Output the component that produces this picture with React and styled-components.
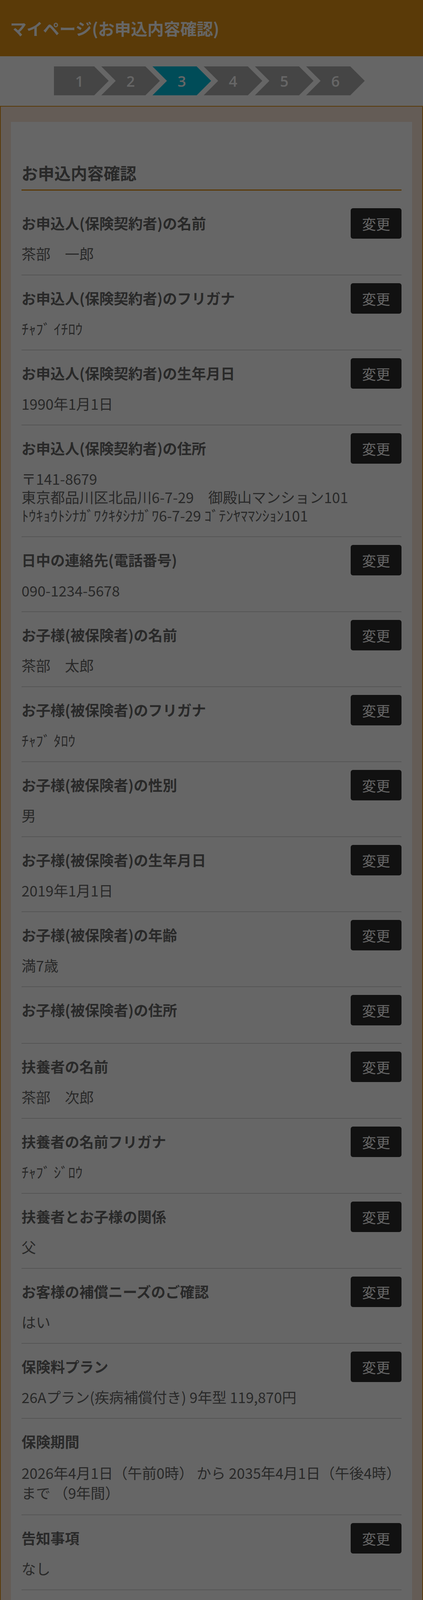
import styled, { createGlobalStyle } from 'styled-components'

const GlobalStyle = createGlobalStyle`
  html, body {
    margin: 0;
    padding: 0;
    background: #fff;
  }
  body {
    font-family: "Noto Sans CJK JP", "Noto Sans", sans-serif;
    color: #666;
  }
  * {
    box-sizing: border-box;
  }
`

const Page = styled.div`
  position: relative;
  width: 1082px;
  padding-bottom: 6px;
`

// coach-mark backdrop, the highlighted parts sit above it
const Dimmer = styled.div`
  position: absolute;
  inset: 0;
  background: rgba(0, 0, 0, 0.6);
  z-index: 10;
  pointer-events: none;
`

const Header = styled.header`
  height: 144px;
  background: #e19114;
  display: flex;
  align-items: center;
  padding-left: 26px;
`

const HeaderTitle = styled.h1`
  margin: 0;
  font-size: 42px;
  font-weight: 700;
  line-height: 1;
  color: #fff;
`

const StepBar = styled.ol`
  list-style: none;
  margin: 0;
  height: 127px;
  padding: 26px 11px 27px 0;
  display: flex;
  justify-content: center;
  background: #fff;
`

const Step = styled.li`
  width: ${p => (p.$first ? 140 : 150)}px;
  height: 74px;
  margin-left: ${p => (p.$first ? 0 : -19)}px;
  padding-right: ${p => (p.$first ? 10 : 0)}px;
  background: ${p => (p.$active ? '#00bedc' : '#acacac')};
  clip-path: ${p =>
    p.$first
      ? 'polygon(0 0, 103px 0, 140px 50%, 103px 100%, 0 100%)'
      : 'polygon(0 0, 113px 0, 150px 50%, 113px 100%, 0 100%, 37px 50%)'};
  display: flex;
  align-items: center;
  justify-content: center;
  font-family: "Open Sans", "Noto Sans", sans-serif;
  font-size: 38px;
  font-weight: 600;
  color: #fff;
`

const Panel = styled.main`
  border: 2px solid #e19114;
  background: #fae6d7;
  padding: 39px 26px 38px;
`

const Content = styled.div`
  background: #fff;
  padding: 100px 27px 71px;
`

const SectionHeading = styled.h2`
  margin: ${p => p.$top}px 0 ${p => p.$bottom}px;
  padding-bottom: 14px;
  border-bottom: 3px solid #e19114;
  font-size: 42px;
  font-weight: 700;
  line-height: 59px;
  color: #666;
`

const Row = styled.div`
  padding: 20px 0 30px;
  border-bottom: 2px solid #d5d5d5;
`

const RowHead = styled.div`
  display: flex;
  align-items: center;
  justify-content: space-between;
  gap: 20px;
  min-height: 78px;
`

const Label = styled.div`
  font-size: 37px;
  font-weight: 700;
  line-height: 1.4;
`

const ChangeButton = styled.button`
  flex: none;
  width: 130px;
  height: 78px;
  border: none;
  border-radius: 6px;
  background: #2b2b2b;
  color: #fff;
  font-family: inherit;
  font-size: 36px;
  padding: 0;
`

const Value = styled.div`
  margin-top: 15px;
  font-size: 37px;
  line-height: ${p => p.$lh || 47}px;
`

const Highlight = styled.div`
  position: relative;
  z-index: 11;
  margin-top: ${p => p.$top || 0}px;

  &::before {
    content: '';
    position: absolute;
    inset: ${p => p.$inset};
    background: #fff;
    border: 5px solid #ed1c24;
    z-index: -1;
  }
`

const NoticeBox = styled.div`
  background: #fff;
  border: 8px solid #3c3494;
  box-shadow: inset 0 0 0 1px #aaa3d6;
  padding: 50px 45px 83px 54px;
  color: #555;
  font-size: 37px;
`

const NoticeText = styled.p`
  margin: 0 0 ${p => p.$mb}px;
  line-height: 55px;
`

const CheckLine = styled.div`
  height: 49px;
  display: flex;
  align-items: center;
`

const CheckBox = styled.input`
  appearance: none;
  margin: 0;
  width: 32px;
  height: 31px;
  border: 2px solid #8c8c8c;
  border-radius: 5px;
  background: #fff;
`

const CheckLabel = styled.label`
  display: block;
  line-height: 49px;
`

const TextLink = styled.a`
  color: #3d8fd0;
  text-decoration: underline;
`

const BodyText = styled.p`
  margin: ${p => p.$top}px 0 0;
  font-size: 37px;
  line-height: 55px;
`

const ButtonRow = styled.div`
  margin-top: 96px;
  display: flex;
  justify-content: center;
  gap: 63px;
`

const BackButton = styled.button`
  width: 189px;
  height: 118px;
  border: 5px solid #6a6a6a;
  border-radius: 15px;
  background: #878787;
  color: #fff;
  font-family: inherit;
  font-size: 37px;
`

const NextButton = styled.button`
  display: block;
  width: 241px;
  height: 118px;
  border: 5px solid #6e8fa6;
  border-radius: 15px;
  background: #b0d9f1;
  color: #9a9a9a;
  font-family: inherit;
  font-size: 37px;
`

const rows = [
  { label: 'お申込人(保険契約者)の名前', value: ['茶部　一郎'], edit: true },
  { label: 'お申込人(保険契約者)のフリガナ', value: ['ﾁｬﾌﾞ ｲﾁﾛｳ'], edit: true },
  { label: 'お申込人(保険契約者)の生年月日', value: ['1990年1月1日'], edit: true },
  {
    label: 'お申込人(保険契約者)の住所',
    value: [
      '〒141-8679',
      '東京都品川区北品川6-7-29　御殿山マンション101',
      'ﾄｳｷｮｳﾄｼﾅｶﾞﾜｸｷﾀｼﾅｶﾞﾜ6-7-29 ｺﾞﾃﾝﾔﾏﾏﾝｼｮﾝ101',
    ],
    edit: true,
  },
  { label: '日中の連絡先(電話番号)', value: ['090-1234-5678'], edit: true },
  { label: 'お子様(被保険者)の名前', value: ['茶部　太郎'], edit: true },
  { label: 'お子様(被保険者)のフリガナ', value: ['ﾁｬﾌﾞ ﾀﾛｳ'], edit: true },
  { label: 'お子様(被保険者)の性別', value: ['男'], edit: true },
  { label: 'お子様(被保険者)の生年月日', value: ['2019年1月1日'], edit: true },
  { label: 'お子様(被保険者)の年齢', value: ['満7歳'], edit: true },
  { label: 'お子様(被保険者)の住所', value: [], edit: true },
  { label: '扶養者の名前', value: ['茶部　次郎'], edit: true },
  { label: '扶養者の名前フリガナ', value: ['ﾁｬﾌﾞ ｼﾞﾛｳ'], edit: true },
  { label: '扶養者とお子様の関係', value: ['父'], edit: true },
  { label: 'お客様の補償ニーズのご確認', value: ['はい'], edit: true },
  { label: '保険料プラン', value: ['26Aプラン(疾病補償付き) 9年型 119,870円'], edit: true },
  {
    label: '保険期間',
    value: ['2026年4月1日（午前0時） から 2035年4月1日（午後4時） まで （9年間）'],
    lh: 51,
  },
  { label: '告知事項', value: ['なし'], edit: true },
  { label: '代理店', value: ['ダイレクトマーケティング本部（13996）'] },
]

const steps = [1, 2, 3, 4, 5, 6]

export default function App() {
  return (
    <Page>
      <GlobalStyle />
      <Header>
        <HeaderTitle>マイページ(お申込内容確認)</HeaderTitle>
      </Header>

      <StepBar>
        {steps.map(n => (
          <Step key={n} $first={n === 1} $active={n === 3}>
            {n}
          </Step>
        ))}
      </StepBar>

      <Panel>
        <Content>
          <SectionHeading $top={0} $bottom={25}>お申込内容確認</SectionHeading>

          {rows.map(row => (
            <Row key={row.label}>
              <RowHead>
                <Label>{row.label}</Label>
                {row.edit && <ChangeButton type="button">変更</ChangeButton>}
              </RowHead>
              <Value $lh={row.lh}>
                {row.value.map((line, i) => (
                  <div key={i}>{line}</div>
                ))}
              </Value>
            </Row>
          ))}

          <Highlight $top={36} $inset="-16px -16px -18px -17px">
            <NoticeBox>
              <NoticeText $mb={28}>
                特に以下の項目について、お申込み前に再度ご確認ください。
              </NoticeText>
              <NoticeText $mb={47}>
                選択したプランの補償内容、保険金額、保険期間、保険料払込方法はご希望どおりですか。
                <br />
                また、補償内容、保険金額、保険料払込方法は当初のご意向とも相違ありませんか。
              </NoticeText>
              <CheckLine>
                <CheckBox type="checkbox" id="agree" />
              </CheckLine>
              <CheckLabel htmlFor="agree">
                「<TextLink href="#">重要事項説明書</TextLink>」 の内容について確認しました。
              </CheckLabel>
            </NoticeBox>
          </Highlight>

          <SectionHeading $top={47} $bottom={0}>保険料のお支払いについて</SectionHeading>
          <BodyText $top={25}>
            クレジットカードによるお支払いとなります。下記の通り、クレジットカードによるお支払い手続き完了日により保険始期日が異なりますので、ご注意ください。
          </BodyText>

          <SectionHeading $top={48} $bottom={0}>保険始期(補償開始日)について</SectionHeading>
          <BodyText $top={25}>
            2026年3月31日までにクレジットカードによるお支払い手続きが完了した場合、保険始期日は2026年4月1日となります。
            <br />
            2026年4月1日以降にクレジットカードによるお支払い手続きが完了した場合は、保険始期日は保険料決済日の属する月の翌月1日となります。
          </BodyText>

          <SectionHeading $top={48} $bottom={0}>保険期間と契約の継続について</SectionHeading>
          <BodyText $top={25}>
            保険期間はお申込みプランにより異なり、1年間から9年間までです。保険期間が１年のご契約については、保険期間の満了する３ヶ月前までに、書面でのご通知がない限り、毎年自動的に継続します。ただし、被保険者が22歳の誕生日を迎えた後の保険始期においては、自動継続を行いません。保険期間が１年を超える長期契約については保険期間満了時に保険契約は終了となります。
          </BodyText>

          <SectionHeading $top={48} $bottom={0}>Web約款の導入について</SectionHeading>
          <BodyText $top={25}>
            チャブ保険ではお客様の利便性と環境保護を推進するためにインターネットでご覧いただける
            <TextLink href="#">Web約款</TextLink>を導入いたしました。
          </BodyText>
          <BodyText $top={27}>
            インターネットからお申込みいただいた場合は、約款集(冊子版)のご送付を省略させていただいておりますが、約款集(冊子版)をご希望の場合は弊社までご連絡ください。
          </BodyText>

          <ButtonRow>
            <BackButton type="button">戻る</BackButton>
            <Highlight $inset="-28px -31px -30px -22px">
              <NextButton type="button">次へ</NextButton>
            </Highlight>
          </ButtonRow>
        </Content>
      </Panel>

      <Dimmer />
    </Page>
  )
}
